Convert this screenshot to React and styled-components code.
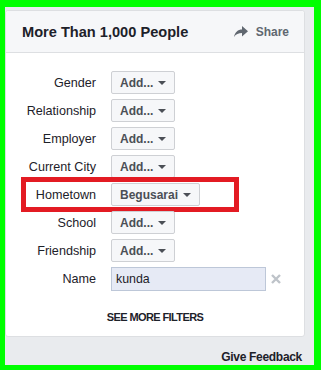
import styled, { createGlobalStyle } from "styled-components";

const GlobalStyle = createGlobalStyle`
  body {
    margin: 0;
    font-family: "Liberation Sans", Arial, sans-serif;
  }
`;

const filters = [
  { label: "Gender", value: "Add..." },
  { label: "Relationship", value: "Add..." },
  { label: "Employer", value: "Add..." },
  { label: "Current City", value: "Add..." },
  { label: "Hometown", value: "Begusarai", marked: true },
  { label: "School", value: "Add..." },
  { label: "Friendship", value: "Add..." },
];

export default function App() {
  return (
    <>
      <GlobalStyle />
      <Frame>
        <Card>
          <Header>
            <Title>More Than 1,000 People</Title>
            <ShareLink>
              <svg width="14" height="11" viewBox="0 0 14 11">
                <path d="M0 11 C1 6 4 3.5 8 3.5 V0 L14 5.2 L8 10.4 V7 C4.5 7 2 8 0 11 Z" fill="#606770" />
              </svg>
              Share
            </ShareLink>
          </Header>
          <Body>
            {filters.map((f) => (
              <Row key={f.label}>
                <Label>{f.label}</Label>
                <Dropdown>
                  {f.value}
                  <Caret />
                </Dropdown>
                {f.marked && <Highlight />}
              </Row>
            ))}
            <Row>
              <Label>Name</Label>
              <NameInput defaultValue="kunda" />
              <Clear>
                <svg width="10" height="10" viewBox="0 0 10 10">
                  <path d="M1 1 L9 9 M9 1 L1 9" stroke="#bec3c9" strokeWidth="2.4" />
                </svg>
              </Clear>
            </Row>
            <MoreFilters>SEE MORE FILTERS</MoreFilters>
          </Body>
        </Card>
        <Feedback>Give Feedback</Feedback>
      </Frame>
    </>
  );
}

const Frame = styled.div`
  box-sizing: border-box;
  width: 321px;
  height: 370px;
  border-style: solid;
  border-color: #00ff00;
  border-width: 7px 7px 5px 5px;
  background: #e9ebee;
  padding-top: 3px;
  display: flex;
  flex-direction: column;
`;

const Card = styled.div`
  box-sizing: border-box;
  width: 300px;
  height: 328px;
  background: #fff;
  border: 1px solid #dddfe2;
  border-radius: 3px;
  display: flex;
  flex-direction: column;
`;

const Header = styled.div`
  height: 41px;
  background: #f6f7f9;
  border-bottom: 1px solid #dddfe2;
  border-radius: 3px 3px 0 0;
  display: flex;
  align-items: center;
  justify-content: space-between;
  padding: 0 15px 0 16px;
`;

const Title = styled.div`
  font-size: 14.6px;
  font-weight: bold;
  color: #1d2129;
`;

const ShareLink = styled.div`
  display: flex;
  align-items: center;
  gap: 8px;
  font-size: 12px;
  font-weight: bold;
  color: #606770;
`;

const Body = styled.div`
  padding-top: 18px;
  display: flex;
  flex-direction: column;
  gap: 5px;
`;

const Row = styled.div`
  position: relative;
  display: flex;
  align-items: center;
  min-height: 23px;
`;

const Label = styled.div`
  width: 90px;
  text-align: right;
  margin-right: 15px;
  font-size: 12.6px;
  color: #1d2129;
`;

const Dropdown = styled.div`
  box-sizing: border-box;
  height: 23px;
  display: flex;
  align-items: center;
  gap: 5px;
  padding: 0 8px;
  background: #f6f7f9;
  border: 1px solid #ced0d4;
  border-radius: 2px;
  font-size: 12px;
  font-weight: bold;
  color: #4b4f56;
`;

const Caret = styled.span`
  width: 0;
  height: 0;
  border-left: 4px solid transparent;
  border-right: 4px solid transparent;
  border-top: 4px solid #4b4f56;
  margin-top: 1px;
`;

const Highlight = styled.div`
  position: absolute;
  left: 15px;
  top: -6px;
  width: 218px;
  height: 35px;
  box-sizing: border-box;
  border: 5px solid #e31b23;
  pointer-events: none;
`;

const NameInput = styled.input`
  box-sizing: border-box;
  width: 155px;
  height: 24px;
  padding: 0 4px;
  background: #e6eaf5;
  border: 1px solid #bdc7d8;
  font-family: "Liberation Sans", Arial, sans-serif;
  font-size: 12.4px;
  color: #1d2129;
  outline: none;
`;

const Clear = styled.div`
  display: flex;
  margin-left: 5px;
`;

const MoreFilters = styled.div`
  margin-top: 14px;
  text-align: center;
  font-size: 11px;
  line-height: 14px;
  font-weight: bold;
  letter-spacing: -0.6px;
  color: #1d2129;
`;

const Feedback = styled.div`
  margin-top: 12px;
  padding-right: 12px;
  text-align: right;
  font-size: 12px;
  line-height: 16px;
  font-weight: bold;
  letter-spacing: -0.3px;
  color: #1d2129;
`;
